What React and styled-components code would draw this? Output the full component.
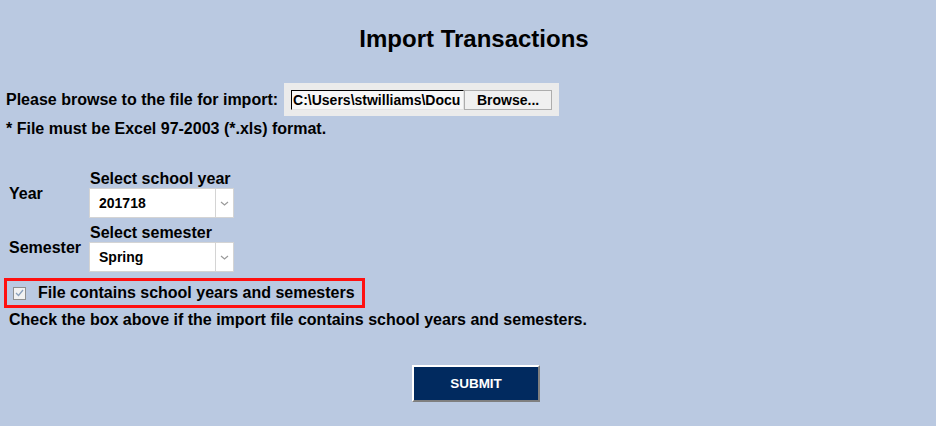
import styled, { createGlobalStyle } from "styled-components";

const GlobalStyle = createGlobalStyle`
  body {
    margin: 0;
    background: #bac9e1;
    font-family: "Liberation Sans", Arial, sans-serif;
    font-weight: bold;
    font-size: 16px;
    color: #000;
  }
`;

const Page = styled.div`
  width: 936px;
  height: 426px;
  padding: 0 6px;
  box-sizing: border-box;
  overflow: hidden;
`;

const Title = styled.h1`
  margin: 26px 0 0;
  padding-left: 12px;
  font-size: 24px;
  line-height: 26px;
  text-align: center;
`;

const BrowseRow = styled.div`
  display: flex;
  align-items: center;
  margin-top: 31px;
  height: 33px;
`;

const FileBox = styled.div`
  display: flex;
  align-items: center;
  margin-left: 6px;
  width: 275px;
  height: 33px;
  padding: 0 7px;
  box-sizing: border-box;
  background: #ebebeb;
`;

const FilePath = styled.div`
  width: 173px;
  height: 20px;
  box-sizing: border-box;
  padding-left: 1px;
  border-top: 1px solid #000;
  border-left: 1px solid #000;
  border-right: 1px solid #e3e3e3;
  border-bottom: 1px solid #e3e3e3;
  background: #f7f7f7;
  font-size: 14px;
  line-height: 18px;
  white-space: nowrap;
  overflow: hidden;
`;

const BrowseButton = styled.button`
  width: 88px;
  height: 20px;
  padding: 0;
  border: 1px solid #adadad;
  background: #f0f0f0;
  font: inherit;
  font-size: 14px;
  line-height: 18px;
  color: #000;
`;

const Line = styled.div`
  margin-top: ${(p) => p.$top || 0}px;
  padding-left: ${(p) => p.$indent || 0}px;
  line-height: 18px;
`;

const Form = styled.div`
  display: grid;
  grid-template-columns: 80px 145px;
  row-gap: 6px;
  margin-top: 32px;
  padding-left: 3px;
`;

const RowLabel = styled.div`
  display: flex;
  align-items: center;
`;

const Field = styled.div`
  display: flex;
  flex-direction: column;
`;

const FieldCaption = styled.div`
  line-height: 18px;
  padding-left: 1px;
  white-space: nowrap;
`;

const Select = styled.div`
  display: flex;
  height: 30px;
  box-sizing: border-box;
  border: 1px solid #d4d4d4;
  background: #fff;
`;

const SelectValue = styled.div`
  flex: 1;
  padding-left: 9px;
  font-size: 14px;
  line-height: 28px;
`;

const SelectArrow = styled.div`
  width: 17px;
  border-left: 1px solid #d4d4d4;
  display: flex;
  align-items: center;
  justify-content: center;
`;

const Highlight = styled.div`
  display: flex;
  align-items: center;
  width: 361px;
  height: 30px;
  box-sizing: border-box;
  margin: 6px 0 0 -2px;
  border: 3px solid #ff1010;
  padding-left: 6px;
`;

const CheckBox = styled.span`
  width: 13px;
  height: 13px;
  box-sizing: border-box;
  border: 1px solid #8e8f8f;
  background: #f2f2f2;
  display: flex;
  align-items: center;
  justify-content: center;
  margin-right: 12px;
`;

const SubmitRow = styled.div`
  display: flex;
  justify-content: center;
  padding-left: 16px;
  margin-top: 36px;
`;

const SubmitButton = styled.button`
  width: 128px;
  height: 37px;
  border: 2px solid;
  border-color: #fff #7f7f7f #7f7f7f #fff;
  background: #012a5f;
  color: #fff;
  font: inherit;
  font-size: 13.5px;
  padding: 0;
`;

function Chevron() {
  return (
    <svg width="9" height="5" viewBox="0 0 9 5">
      <path d="M1 1 L4.5 4 L8 1" fill="none" stroke="#9a9a9a" strokeWidth="1.2" />
    </svg>
  );
}

function Dropdown({ caption, value }) {
  return (
    <Field>
      <FieldCaption>{caption}</FieldCaption>
      <Select>
        <SelectValue>{value}</SelectValue>
        <SelectArrow>
          <Chevron />
        </SelectArrow>
      </Select>
    </Field>
  );
}

export default function App() {
  return (
    <>
      <GlobalStyle />
      <Page>
        <Title>Import Transactions</Title>
        <BrowseRow>
          <span>Please browse to the file for import:</span>
          <FileBox>
            <FilePath>C:\Users\stwilliams\Docu</FilePath>
            <BrowseButton>Browse...</BrowseButton>
          </FileBox>
        </BrowseRow>
        <Line $top={4}>* File must be Excel 97-2003 (*.xls) format.</Line>
        <Form>
          <RowLabel>Year</RowLabel>
          <Dropdown caption="Select school year" value="201718" />
          <RowLabel>Semester</RowLabel>
          <Dropdown caption="Select semester" value="Spring" />
        </Form>
        <Highlight>
          <CheckBox>
            <svg width="9" height="8" viewBox="0 0 9 8">
              <path d="M1 4 L3.5 6.5 L8 1" fill="none" stroke="#8aa0bb" strokeWidth="1.3" />
            </svg>
          </CheckBox>
          File contains school years and semesters
        </Highlight>
        <Line $top={3} $indent={3}>
          Check the box above if the import file contains school years and semesters.
        </Line>
        <SubmitRow>
          <SubmitButton>SUBMIT</SubmitButton>
        </SubmitRow>
      </Page>
    </>
  );
}
